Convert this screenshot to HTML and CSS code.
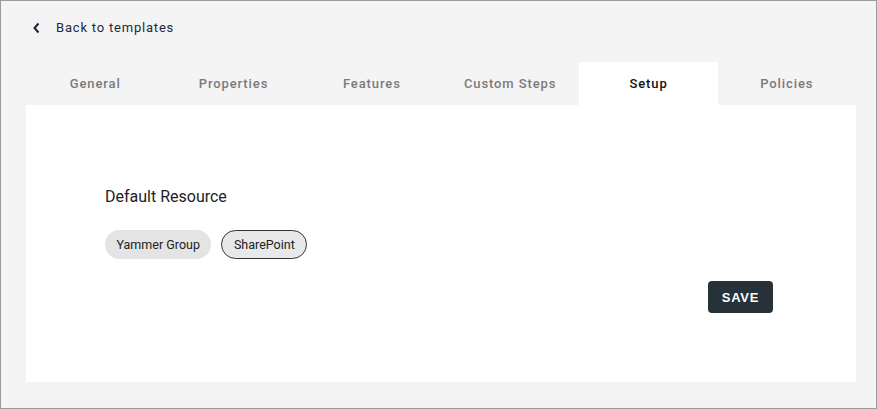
FILE: index.html
```html
<!DOCTYPE html>
<html>
<head>
<meta charset="utf-8">
<link rel="stylesheet" href="styles.css">
</head>
<body>
<div class="frame">
  <a class="back" href="#">
    <svg class="chev" width="10" height="12" viewBox="0 0 10 12"><path d="M6.5 1.5 L2.5 6 L6.5 10.5" fill="none" stroke="#1b2336" stroke-width="2"/></svg>
    <span>Back to templates</span>
  </a>
  <div class="tabs">
    <div class="tab">General</div>
    <div class="tab">Properties</div>
    <div class="tab">Features</div>
    <div class="tab">Custom Steps</div>
    <div class="tab active">Setup</div>
    <div class="tab">Policies</div>
  </div>
  <div class="panel">
    <div class="title">Default Resource</div>
    <div class="chips">
      <span class="chip">Yammer Group</span>
      <span class="chip selected">SharePoint</span>
    </div>
    <div class="actions">
      <button class="save">SAVE</button>
    </div>
  </div>
</div>
</body>
</html>
```

FILE: styles.css
```css
html, body {
  margin: 0;
  padding: 0;
}
body {
  font-family: Roboto, "Liberation Sans", sans-serif;
}
.frame {
  box-sizing: border-box;
  width: 877px;
  height: 409px;
  border: 1px solid #9b9b9b;
  background: #f4f4f4;
  padding: 0 20px 0 25px;
}
.back {
  display: flex;
  align-items: center;
  height: 53px;
  padding-left: 6px;
  text-decoration: none;
  color: #1f2940;
  font-size: 13px;
  letter-spacing: 0.8px;
}
.chev {
  margin-right: 14px;
}
.tabs {
  display: grid;
  grid-template-columns: repeat(6, 1fr);
  margin-top: 8px;
  height: 43px;
}
.tab {
  display: flex;
  align-items: center;
  justify-content: center;
  font-size: 13px;
  font-weight: 500;
  letter-spacing: 0.9px;
  color: #7a7a7a;
}
.tab.active {
  background: #fff;
  color: #111;
}
.panel {
  background: #fff;
  height: 277px;
  box-sizing: border-box;
  padding: 82px 83px 0 79px;
}
.title {
  font-size: 16px;
  color: #1e1e1e;
  line-height: 20px;
}
.chips {
  display: flex;
  gap: 10px;
  margin-top: 23px;
}
.chip {
  box-sizing: border-box;
  height: 29px;
  display: inline-flex;
  align-items: center;
  padding: 0 11.5px;
  border-radius: 15px;
  background: #e4e4e4;
  font-size: 12.5px;
  color: #222;
}
.chip.selected {
  border: 1px solid #333;
  background: #e6e8ea;
}
.actions {
  display: flex;
  justify-content: flex-end;
  margin-top: 22px;
}
.save {
  width: 65px;
  height: 32px;
  border: none;
  border-radius: 4px;
  background: #263238;
  color: #fff;
  font-family: "Liberation Sans", Arial, sans-serif;
  font-weight: bold;
  font-size: 13px;
  letter-spacing: 0.8px;
  padding: 0;
}
```
